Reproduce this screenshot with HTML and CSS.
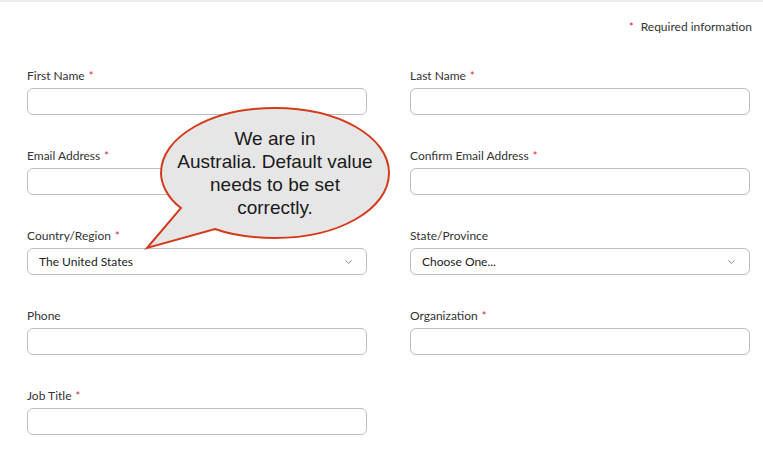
FILE: index.html
```html
<!DOCTYPE html>
<html>
<head>
<meta charset="utf-8">
<link rel="stylesheet" href="styles.css">
</head>
<body>
<div class="page">
  <div class="required-note"><span class="star">*</span> Required information</div>
  <div class="form">
    <div class="field"><label class="label">First Name <span class="star">*</span></label><div class="input"></div></div>
    <div class="field"><label class="label">Last Name <span class="star">*</span></label><div class="input"></div></div>
    <div class="field"><label class="label">Email Address <span class="star">*</span></label><div class="input"></div></div>
    <div class="field"><label class="label">Confirm Email Address <span class="star">*</span></label><div class="input"></div></div>
    <div class="field"><label class="label">Country/Region <span class="star">*</span></label>
      <div class="input select"><span>The United States</span>
        <svg class="chev" width="7" height="4" viewBox="0 0 7 4"><path d="M0.5 0.5 L3.5 3.3 L6.5 0.5" fill="none" stroke="#888" stroke-width="1"/></svg>
      </div></div>
    <div class="field"><label class="label">State/Province</label>
      <div class="input select"><span>Choose One...</span>
        <svg class="chev" width="7" height="4" viewBox="0 0 7 4"><path d="M0.5 0.5 L3.5 3.3 L6.5 0.5" fill="none" stroke="#888" stroke-width="1"/></svg>
      </div></div>
    <div class="field"><label class="label">Phone</label><div class="input"></div></div>
    <div class="field"><label class="label">Organization <span class="star">*</span></label><div class="input"></div></div>
    <div class="field"><label class="label">Job Title <span class="star">*</span></label><div class="input"></div></div>
  </div>

  <div class="bubble">
    <svg class="bubble-shape" width="250" height="150" viewBox="0 0 250 150">
      <path d="M 40 106 C 25 95, 20 80, 20 71 C 20 35, 70 6, 134 6 C 198 6, 248 35, 248 71 C 248 107, 198 136, 134 136 C 110 136, 88 132, 74 127 L 6 146 Z" fill="#e6e6e6" stroke="#d33b1c" stroke-width="2" stroke-linejoin="miter"/>
    </svg>
    <div class="bubble-text">We are in<br>Australia. Default value<br>needs to be set<br>correctly.</div>
  </div>
</div>
</body>
</html>
```

FILE: styles.css
```css
html, body {
  margin: 0;
  padding: 0;
  background: #fff;
}
body {
  font-family: Lato, "Open Sans", sans-serif;
  color: #222;
  width: 763px;
  height: 462px;
  overflow: hidden;
}
.page {
  position: relative;
  border-top: 2px solid #ebebeb;
  padding: 17px 11px 0 27px;
  height: 443px;
}
.required-note {
  text-align: right;
  font-size: 12px;
  line-height: 16px;
  color: #333;
}
.star {
  color: #d9253a;
  margin-right: 4px;
  font-size: 11px;
}
.label .star { margin-left: 1px; margin-right: 0; }
.form {
  display: grid;
  grid-template-columns: 340px 340px;
  column-gap: 43px;
  row-gap: 33px;
  margin-top: 33px;
}
.field {
  display: flex;
  flex-direction: column;
}
.label {
  font-size: 12px;
  line-height: 16px;
  color: #333;
  margin-bottom: 4px;
}
.input {
  box-sizing: border-box;
  height: 27px;
  border: 1px solid #bdbdc4;
  border-radius: 6px;
  background: #fff;
}
.select {
  display: flex;
  align-items: center;
  justify-content: space-between;
  padding: 0 14px 0 11px;
  font-size: 12px;
  color: #222;
}
.chev { margin-top: 1px; }
.bubble {
  position: absolute;
  left: 141px;
  top: 100px;
  width: 250px;
  height: 150px;
}
.bubble-shape {
  position: absolute;
  left: 0;
  top: 0;
}
.bubble-text {
  position: absolute;
  left: 20px;
  top: 25px;
  width: 228px;
  text-align: center;
  font-family: "Liberation Sans", Arial, sans-serif;
  font-size: 19px;
  line-height: 23px;
  color: #1a1a1a;
}
```
